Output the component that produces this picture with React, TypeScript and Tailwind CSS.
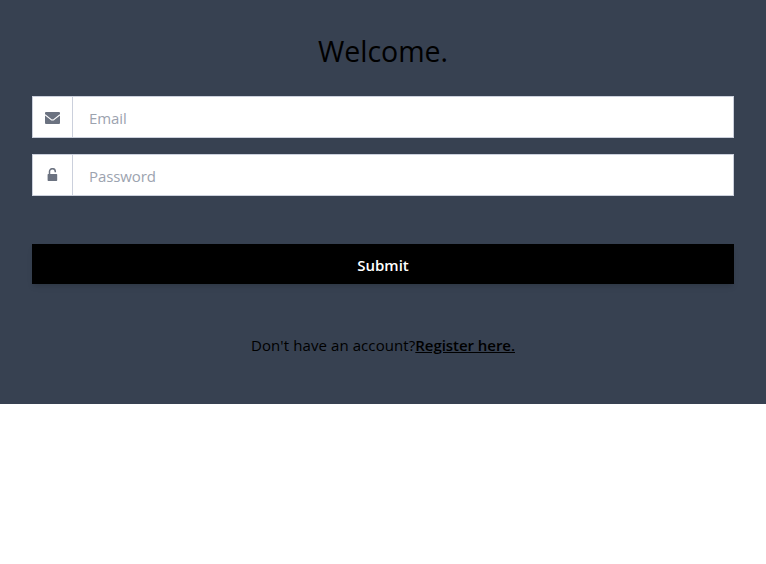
import React from "react";

type FieldProps = { type: string; placeholder: string; icon: React.ReactNode };

function Field({ type, placeholder, icon }: FieldProps) {
  return (
    <div className="flex h-[42px] border border-[#cbd0dc] bg-white">
      <span className="flex w-10 shrink-0 items-center justify-center border-r border-[#cbd0dc] text-[#6b7280]">{icon}</span>
      <input
        type={type}
        placeholder={placeholder}
        className="w-full min-w-0 flex-1 bg-white px-4 pt-[2px] text-[15px] leading-6 tracking-[-0.1px] text-gray-700 outline-none placeholder:text-[#9ca3af]"
      />
    </div>
  );
}

export default function App() {
  return (
    <div className="bg-[#374151] font-['Open_Sans','Noto_Sans',sans-serif] text-black">
      <div className="flex h-[404px] flex-col px-8 pt-[33px]">
        <h1 className="text-center text-[28.5px] leading-9">Welcome.</h1>
        <form className="flex flex-col pt-[27px]">
          <div className="flex flex-col gap-4">
            <Field
              type="email"
              placeholder="Email"
              icon={
                <svg width="15" height="12" viewBox="0 0 15 12" fill="none" className="mt-0.5">
                  <rect width="15" height="12" rx="1" fill="currentColor" />
                  <path d="M0 2.700 5.900 7.400Q7.500 8.600 9.100 7.400L15 2.700" stroke="white" strokeWidth="1.200" />
                </svg>
              }
            />
            <Field
              type="password"
              placeholder="Password"
              icon={
                <svg width="11" height="13" viewBox="0 0 11 13" fill="none" className="-mt-px">
                  <rect x="0.600" y="6" width="9.600" height="7" rx="0.700" fill="currentColor" />
                  <path d="M2.500 6.500V3.600A2.900 2.900 0 0 1 8.300 3.600V4.200" stroke="currentColor" strokeWidth="1.500" />
                </svg>
              }
            />
          </div>
          <button type="button" className="mt-12 h-10 bg-black pt-[2px] text-[15px] font-semibold text-white shadow-md">
            Submit
          </button>
        </form>
        <p className="pt-[49px] text-center text-[15px] leading-6 tracking-[0.09px]">
          Don't have an account?<a className="font-semibold tracking-[-0.05px] underline">Register here.</a>
        </p>
      </div>
    </div>
  );
}
